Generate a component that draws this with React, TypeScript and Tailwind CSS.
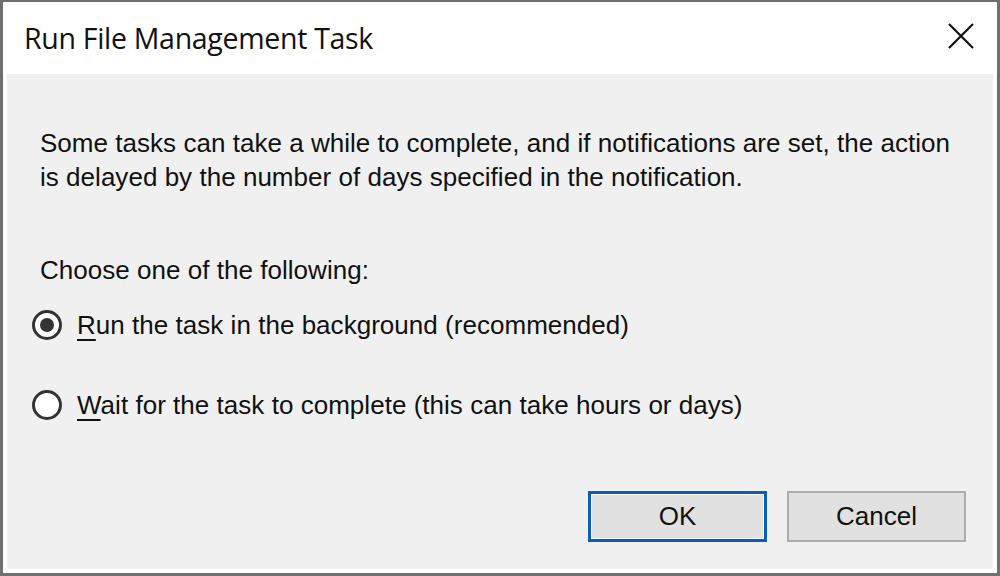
import React from 'react';

const Radio = ({ checked }: { checked?: boolean }) => (
  <span className="flex h-[30px] w-[30px] shrink-0 items-center justify-center rounded-full border-[3px] border-[#333333] bg-white">
    {checked && <span className="h-[14px] w-[14px] rounded-full bg-[#333333]" />}
  </span>
);

const App = () => {
  return (
    <div className="flex h-[576px] w-[1000px] flex-col border-[3px] border-t-2 border-[#707070] bg-white font-['Liberation_Sans',Arial,sans-serif] text-black">
      {/* title bar */}
      <div className="flex h-[72px] shrink-0 items-center justify-between pl-[21px] pr-[22px]">
        <span className="font-['Open_Sans',sans-serif] text-[28.5px] tracking-[-0.3px] text-[#111]">
          Run File Management Task
        </span>
        <svg width="28" height="28" viewBox="0 0 28 28" className="mb-[4px]">
          <path d="M2 2 L26 26 M26 2 L2 26" stroke="#111" strokeWidth="2.2" />
        </svg>
      </div>

      {/* body */}
      <div className="mx-[4px] mb-[4px] flex flex-1 flex-col bg-[#f0f0f0] pl-[33px] pr-[8px] pt-[52px] text-[26px] tracking-[0.03px] text-[#111]">
        <p className="leading-[34px]">
          Some tasks can take a while to complete, and if notifications are set, the action
          <br />
          is delayed by the number of days specified in the notification.
        </p>

        <p className="mt-[59px] leading-[34px]">Choose one of the following:</p>

        <div className="mt-[21px] flex flex-col gap-[46px]">
          <label className="flex items-center gap-[15px] -ml-[8px]">
            <Radio checked />
            <span className="leading-[34px]">
              <span className="underline decoration-2 underline-offset-[5px]">R</span>un the task in the background (recommended)
            </span>
          </label>
          <label className="flex items-center gap-[15px] -ml-[8px]">
            <Radio />
            <span className="leading-[34px]">
              <span className="underline decoration-2 underline-offset-[5px]">W</span>ait for the task to complete (this can take hours or days)
            </span>
          </label>
        </div>

        <div className="mt-auto mb-[27px] flex justify-end gap-[20px] pr-[19px]">
          <button className="h-[51px] w-[179px] border-[3px] border-[#0a5fb4] bg-[#e1e1e1] p-0 text-[26px] outline outline-1 -outline-offset-[4px] outline-white">
            OK
          </button>
          <button className="h-[51px] w-[179px] border-2 border-[#adadad] bg-[#e1e1e1] text-[26px]">
            Cancel
          </button>
        </div>
      </div>
    </div>
  );
};

export default App;
